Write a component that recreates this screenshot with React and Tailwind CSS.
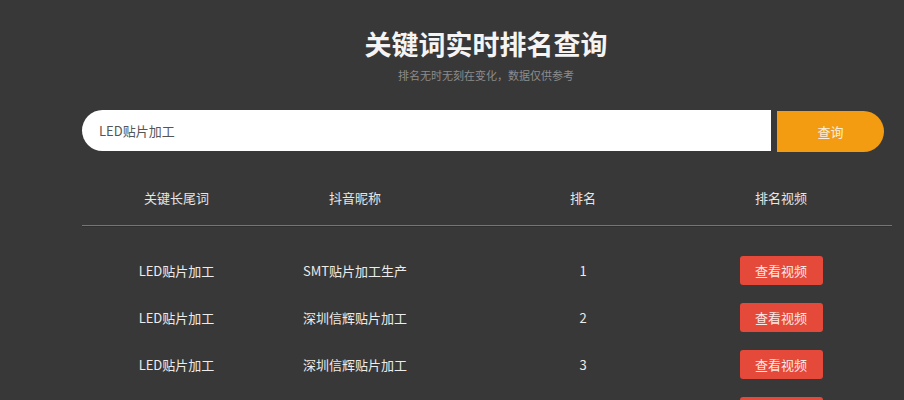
import React from "react";

const rows = [
  { kw: "LED贴片加工", nick: "SMT贴片加工生产", rank: 1 },
  { kw: "LED贴片加工", nick: "深圳信辉贴片加工", rank: 2 },
  { kw: "LED贴片加工", nick: "深圳信辉贴片加工", rank: 3 },
  // only the top of the 4th button shows above the fold
  { kw: "", nick: "", rank: "" },
];

const cols = "grid grid-cols-[189px_168px_288px_108px] items-center text-center";

export default function App() {
  return (
    <div
      className="h-[400px] w-full overflow-hidden bg-[#383838] pt-[24px]"
      style={{ fontFamily: '"Noto Sans CJK SC", "Liberation Sans", sans-serif' }}
    >
      <div className="pl-[68px]">
        <h1 className="h-[40px] text-center text-[27px] font-bold leading-[40px] text-[#f4f4f4]">
          关键词实时排名查询
        </h1>
        <p className="mt-[1px] h-[20px] text-center text-[11px] leading-[20px] text-[#8c8c8c]">
          排名无时无刻在变化，数据仅供参考
        </p>
      </div>

      <div className="ml-[82px] w-[810px]">
        <div className="mt-[25px] flex h-[41px] w-[802px] gap-[6px]">
          <div className="flex h-[41px] w-[689px] items-center rounded-l-full rounded-r-[3px] bg-white pl-[17px] text-[13px] text-[#555]">
            LED贴片加工
          </div>
          <button className="mt-[1px] h-[41px] w-[107px] rounded-l-[4px] rounded-r-full bg-[#f39c12] text-[13px] text-[#fbeede]">
            查询
          </button>
        </div>

        <div className={`${cols} mt-[24px] h-[46px] text-[13px] text-[#e6e6e6]`}>
          <div>关键长尾词</div>
          <div>抖音昵称</div>
          <div>排名</div>
          <div>排名视频</div>
        </div>

        <div className="mt-[4px] h-[2px] border-t border-[#757575] bg-[#303030]" />

        <div className="mt-[20px]">
          {rows.map((r, i) => (
            <div key={i} className={`${cols} h-[47px] text-[13px] text-[#ececec]`}>
              <div>{r.kw}</div>
              <div>{r.nick}</div>
              <div>{r.rank}</div>
              <div className="flex justify-center">
                <button className="h-[29px] w-[83px] rounded-[3px] bg-[#e4493a] text-[13px] text-[#fbe9e6]">
                  {i < 3 ? "查看视频" : ""}
                </button>
              </div>
            </div>
          ))}
        </div>
      </div>
    </div>
  );
}
